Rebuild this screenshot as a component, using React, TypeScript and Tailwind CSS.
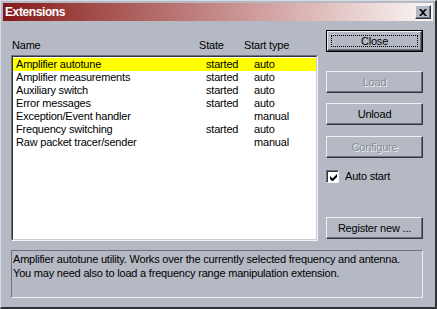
import React from "react";

const rows = [
  { name: "Amplifier autotune", state: "started", type: "auto", selected: true },
  { name: "Amplifier measurements", state: "started", type: "auto" },
  { name: "Auxiliary switch", state: "started", type: "auto" },
  { name: "Error messages", state: "started", type: "auto" },
  { name: "Exception/Event handler", state: "", type: "manual" },
  { name: "Frequency switching", state: "started", type: "auto" },
  { name: "Raw packet tracer/sender", state: "", type: "manual" },
];

const Button = ({
  label,
  disabled,
  isDefault,
}: {
  label: string;
  disabled?: boolean;
  isDefault?: boolean;
}) => {
  if (isDefault) {
    return (
      <div className="h-[22px] w-[97px] border border-black">
        <div className="relative flex h-full w-full items-center justify-center border-t border-l border-t-[#eef0f3] border-l-[#eef0f3] border-r border-b border-r-[#3a3e46] border-b-[#3a3e46] shadow-[inset_-1px_-1px_0_#6c7280]">
          <div className="absolute inset-[3px] border border-dotted border-black" />
          <span className="text-black">{label}</span>
        </div>
      </div>
    );
  }
  return (
    <div className="flex h-[22px] w-[97px] items-center justify-center border-t border-l border-t-[#eef0f3] border-l-[#eef0f3] border-r border-b border-r-[#30343c] border-b-[#30343c] shadow-[inset_-1px_-1px_0_#6c7280]">
      {disabled ? (
        <span className="text-[#868c98] [text-shadow:1px_1px_0_#eef0f3]">{label}</span>
      ) : (
        <span className="text-black">{label}</span>
      )}
    </div>
  );
};

export default function App() {
  return (
    <div
      className="h-[309px] w-[437px] bg-[#b4b9c3] text-[11px] leading-[13px] tracking-[-0.2px] text-black"
      style={{ fontFamily: '"Liberation Sans", Arial, sans-serif' }}
    >
      <div className="flex h-full w-full flex-col border-t border-l border-t-[#d8dce2] border-l-[#d8dce2] border-r-2 border-b-2 border-r-[#303238] border-b-[#303238] p-[2px]">
        {/* title bar */}
        <div className="flex h-[18px] shrink-0 items-center justify-between bg-gradient-to-r from-[#85161a] via-[#c58a8a] to-[#faf7f7] pr-[2px] pl-[2px]">
          <span className="text-[12px] font-bold tracking-[-0.4px] text-white">Extensions</span>
          <div className="flex h-[14px] w-[16px] items-center justify-center border-t border-l border-t-[#eef0f3] border-l-[#eef0f3] border-r border-b border-r-[#30343c] border-b-[#30343c] bg-[#b4b9c3] shadow-[inset_-1px_-1px_0_#6c7280]">
            <svg width="8" height="7" viewBox="0 0 8 7">
              <path d="M0 0h2l2 2 2-2h2L5 3.5 8 7H6L4 5 2 7H0l3-3.5z" fill="#000" />
            </svg>
          </div>
        </div>

        <div className="flex pl-[8px]">
          {/* left: list */}
          <div className="flex w-[307px] flex-col">
            <div className="mt-[18px] flex h-[13px] pl-[1px]">
              <span className="w-[187px]">Name</span>
              <span className="w-[45px]">State</span>
              <span>Start type</span>
            </div>
            <div className="mt-[3px] h-[186px] border-t border-l border-t-[#6c7280] border-l-[#6c7280] border-r border-b border-r-[#f2f4f6] border-b-[#f2f4f6]">
              <div className="h-full w-full border-t border-l border-t-[#30343c] border-l-[#30343c] border-r border-b border-r-[#c8ccd4] border-b-[#c8ccd4] bg-white pt-[1px]">
                {rows.map((r) => (
                  <div
                    key={r.name}
                    className={`flex h-[13px] items-center pl-[3px] ${r.selected ? "bg-[#ffff00]" : ""}`}
                  >
                    <span className="w-[190px]">{r.name}</span>
                    <span className="w-[48px]">{r.state}</span>
                    <span>{r.type}</span>
                  </div>
                ))}
              </div>
            </div>
          </div>

          {/* right: buttons */}
          <div className="ml-[8px] flex flex-col pt-[9px]">
            <Button label="Close" isDefault />
            <div className="mt-[19px]">
              <Button label="Load" disabled />
            </div>
            <div className="mt-[10px]">
              <Button label="Unload" />
            </div>
            <div className="mt-[11px]">
              <Button label="Configure" disabled />
            </div>
            <div className="mt-[12px] flex items-center">
              <div className="flex h-[13px] w-[13px] items-center justify-center border-t border-l border-t-[#6c7280] border-l-[#6c7280] border-r border-b border-r-[#f2f4f6] border-b-[#f2f4f6]">
                <div className="flex h-full w-full items-center justify-center border-t border-l border-t-[#30343c] border-l-[#30343c] bg-white">
                  <svg width="7" height="7" viewBox="0 0 7 7">
                    <path d="M0 2v3l2 2h1l4-4V0L2.5 4.5z" fill="#000" />
                  </svg>
                </div>
              </div>
              <span className="ml-[6px]">Auto start</span>
            </div>
            <div className="mt-[34px]">
              <Button label="Register new ..." />
            </div>
          </div>
        </div>

        {/* description */}
        <div className="mt-[9px] ml-[8px] h-[48px] w-[412px] border-t border-l border-t-[#6c7280] border-l-[#6c7280] border-r border-b border-r-[#eef0f3] border-b-[#eef0f3] pl-[1px] pt-[1px]">
          <p className="leading-[14px]">
            Amplifier autotune utility. Works over the currently selected frequency and antenna.
            <br />
            You may need also to load a frequency range manipulation extension.
          </p>
        </div>
      </div>
    </div>
  );
}
